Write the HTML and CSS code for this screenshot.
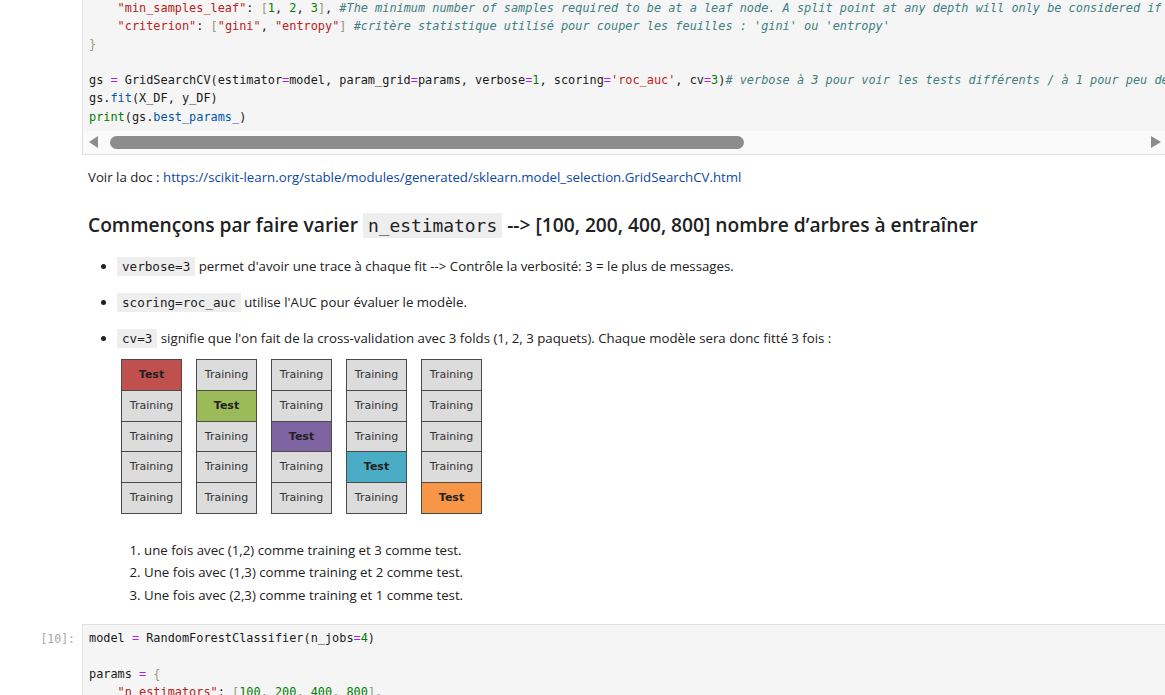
FILE: index.html
```html
<!DOCTYPE html>
<html lang="fr">
<head>
<meta charset="utf-8">
<title>Notebook</title>
<link rel="stylesheet" href="styles.css">
</head>
<body>
<div class="notebook">

  <div class="cell code-cell first">
    <div class="prompt"></div>
    <div class="editor">
<pre class="code">    <span class="s">"min_samples_leaf"</span>: <span class="b">[</span><span class="n">1</span>, <span class="n">2</span>, <span class="n">3</span><span class="b">]</span>, <span class="c">#The minimum number of samples required to be at a leaf node. A split point at any depth will only be considered if it leaves at least min_samples_leaf training samples</span>
    <span class="s">"criterion"</span>: <span class="b">[</span><span class="s">"gini"</span>, <span class="s">"entropy"</span><span class="b">]</span> <span class="c">#critère statistique utilisé pour couper les feuilles : 'gini' ou 'entropy'</span>
<span class="b">}</span>

gs <span class="o">=</span> GridSearchCV(estimator<span class="o">=</span>model, param_grid<span class="o">=</span>params, verbose<span class="o">=</span><span class="n">1</span>, scoring<span class="o">=</span><span class="s">'roc_auc'</span>, cv<span class="o">=</span><span class="n">3</span>)<span class="c"># verbose à 3 pour voir les tests différents / à 1 pour peu de messages</span>
gs.<span class="p">fit</span>(X_DF, y_DF)
<span class="k">print</span>(gs.<span class="p">best_params_</span>)</pre>
      <div class="hscroll">
        <span class="arrow left"></span>
        <span class="thumb"></span>
        <span class="track-rest"></span>
        <span class="arrow right"></span>
      </div>
    </div>
  </div>

  <div class="cell md-cell">
    <div class="prompt"></div>
    <div class="md">
      <p class="doc">Voir la doc : <a href="#">https://scikit-learn.org/stable/modules/generated/sklearn.model_selection.GridSearchCV.html</a></p>
      <h2>Commençons par faire varier <code>n_estimators</code> --&gt; [100, 200, 400, 800] nombre d’arbres à entraîner</h2>
      <ul class="bullets">
        <li><code>verbose=3</code> permet d'avoir une trace à chaque fit --&gt; Contrôle la verbosité: 3 = le plus de messages.</li>
        <li><code>scoring=roc_auc</code> utilise l'AUC pour évaluer le modèle.</li>
        <li><code>cv=3</code> signifie que l'on fait de la cross-validation avec 3 folds (1, 2, 3 paquets). Chaque modèle sera donc fitté 3 fois :
          <div class="folds">
            <div class="fold">
              <div class="box test red">Test</div>
              <div class="box">Training</div>
              <div class="box">Training</div>
              <div class="box">Training</div>
              <div class="box">Training</div>
            </div>
            <div class="fold">
              <div class="box">Training</div>
              <div class="box test green">Test</div>
              <div class="box">Training</div>
              <div class="box">Training</div>
              <div class="box">Training</div>
            </div>
            <div class="fold">
              <div class="box">Training</div>
              <div class="box">Training</div>
              <div class="box test purple">Test</div>
              <div class="box">Training</div>
              <div class="box">Training</div>
            </div>
            <div class="fold">
              <div class="box">Training</div>
              <div class="box">Training</div>
              <div class="box">Training</div>
              <div class="box test blue">Test</div>
              <div class="box">Training</div>
            </div>
            <div class="fold">
              <div class="box">Training</div>
              <div class="box">Training</div>
              <div class="box">Training</div>
              <div class="box">Training</div>
              <div class="box test orange">Test</div>
            </div>
          </div>
          <ol class="steps">
            <li>une fois avec (1,2) comme training et 3 comme test.</li>
            <li>Une fois avec (1,3) comme training et 2 comme test.</li>
            <li>Une fois avec (2,3) comme training et 1 comme test.</li>
          </ol>
        </li>
      </ul>
    </div>
  </div>

  <div class="cell code-cell second">
    <div class="prompt">[10]:</div>
    <div class="editor">
<pre class="code">model <span class="o">=</span> RandomForestClassifier(n_jobs<span class="o">=</span><span class="n">4</span>)

params <span class="o">=</span> <span class="b">{</span>
    <span class="s">"n_estimators"</span>: <span class="b">[</span><span class="n">100</span>, <span class="n">200</span>, <span class="n">400</span>, <span class="n">800</span><span class="b">]</span>,
    <span class="s">"max_depth"</span>: <span class="b">[</span><span class="n">3</span><span class="b">]</span>,</pre>
    </div>
  </div>

</div>
</body>
</html>
```

FILE: styles.css
```css
html, body {
  margin: 0;
  padding: 0;
  background: #ffffff;
}

body {
  width: 1165px;
  height: 695px;
  overflow: hidden;
  font-family: "Open Sans", "Noto Sans", sans-serif;
  font-size: 13.25px;
  color: #212121;
}

.notebook {
  margin-top: -1px;
  width: 1167px;
}

.cell {
  display: flex;
}

.prompt {
  flex: 0 0 82px;
  box-sizing: border-box;
  padding-right: 7px;
  padding-top: 6px;
  text-align: right;
  font-family: "DejaVu Sans Mono", monospace;
  font-size: 11.5px;
  line-height: 18px;
  color: #a8a8a8;
}

.editor {
  flex: 1;
  min-width: 0;
  background: #f5f5f5;
  border: 1px solid #e0e0e0;
  overflow: hidden;
}

.first .editor {
  border-top: none;
}

.code {
  margin: 0;
  padding: 0 6px 5px 6px;
  font-family: "DejaVu Sans Mono", monospace;
  font-size: 11.88px;
  line-height: 18.1px;
  color: #1a1a1a;
  white-space: pre;
  overflow: hidden;
}

.s { color: #ba2121; }
.n { color: #008000; }
.b { color: #999977; }
.o { color: #aa22ff; }
.c { color: #408080; font-style: italic; }
.p { color: #0055aa; }
.k { color: #008000; }

.hscroll {
  display: flex;
  align-items: center;
  height: 23px;
  background: #fafafa;
  padding: 0 5px 0 6px;
}

.arrow {
  width: 0;
  height: 0;
  border-top: 6px solid transparent;
  border-bottom: 6px solid transparent;
}

.arrow.left {
  border-right: 9px solid #8c8c8c;
}

.arrow.right {
  border-left: 10px solid #8c8c8c;
}

.thumb {
  width: 634px;
  height: 13px;
  margin-left: 12px;
  background: #8c8c8c;
  border-radius: 7px;
}

.track-rest {
  flex: 1;
}

.second {
  margin-top: 18px;
}

.second .code {
  padding-top: 4px;
}

.md {
  flex: 1;
  padding-left: 6px;
  line-height: 20px;
}

.doc {
  margin: 12px 0 0 0;
}

.doc a {
  color: #0d47a1;
  text-decoration: none;
}

h2 {
  margin: 23px 0 0 0;
  font-size: 19.2px;
  font-weight: 600;
  line-height: 30px;
  color: #212121;
}

h2 code {
  font-family: "DejaVu Sans Mono", monospace;
  font-size: 17.9px;
  font-weight: normal;
  background: #eeeeee;
  padding: 2px 5px;
}

.bullets {
  margin: 15px 0 0 0;
  padding-left: 29px;
}

.bullets > li {
  margin-bottom: 15px;
}

.bullets > li:last-child {
  margin-bottom: 0;
}

.bullets code {
  font-family: "DejaVu Sans Mono", monospace;
  font-size: 12.6px;
  background: #eeeeee;
  padding: 2px 5px;
}

.folds {
  display: flex;
  gap: 14px;
  margin: 10px 0 0 4px;
}

.fold {
  width: 61px;
  box-sizing: border-box;
  border: 1px solid #4a4a4a;
  display: flex;
  flex-direction: column;
}

.box {
  height: 30.6px;
  box-sizing: border-box;
  display: flex;
  align-items: center;
  justify-content: center;
  background: #dcdcdc;
  border-top: 1px solid #4a4a4a;
  font-family: "DejaVu Sans", sans-serif;
  font-size: 11px;
  color: #333333;
}

.box:first-child {
  border-top: none;
}

.box.test {
  font-weight: bold;
  color: #222222;
}

.red { background: #c0504d; }
.green { background: #9bbb59; }
.purple { background: #8064a2; }
.blue { background: #4bacc6; }
.orange { background: #f79646; }

.steps {
  margin: 25px 0 0 0;
  padding-left: 27px;
}

.steps li {
  line-height: 22.5px;
}
```
